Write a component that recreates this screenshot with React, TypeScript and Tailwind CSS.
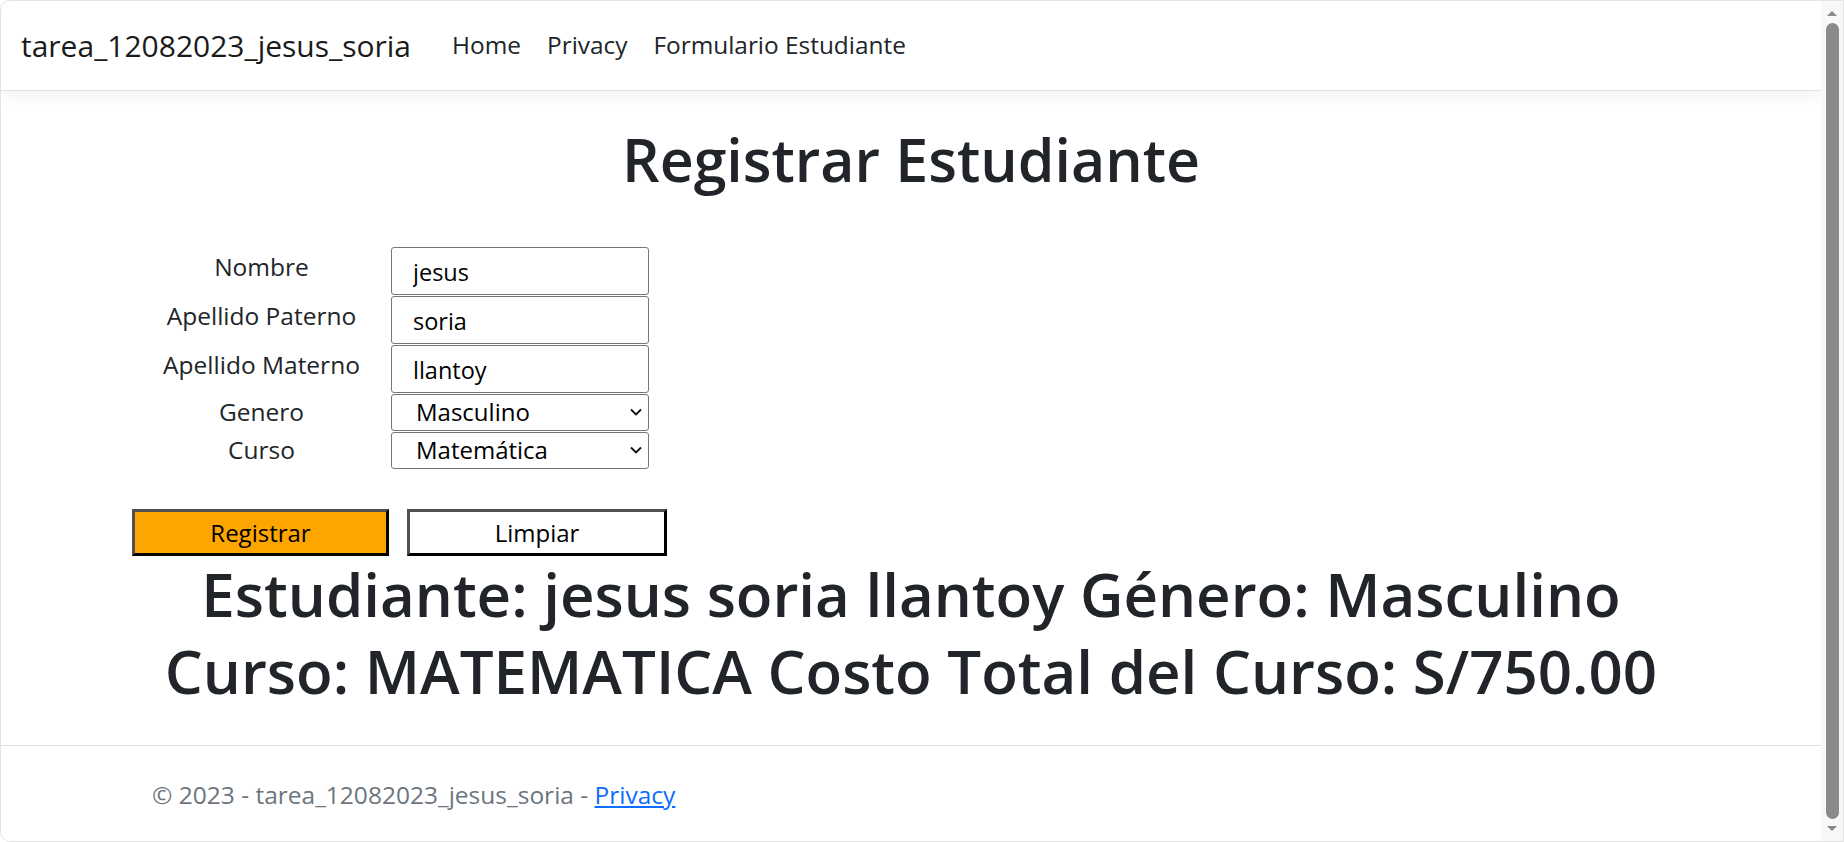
import React from "react";

const font = { fontFamily: '"Open Sans", "Noto Sans", Arial, sans-serif' };

const Chevron = () => (
  <svg width="14" height="10" viewBox="0 0 14 10" fill="none">
    <path d="M2 2.5 L7 7.5 L12 2.5" stroke="#111" strokeWidth="1.8" fill="none" />
  </svg>
);

const TextRow = ({ label, value }: { label: string; value: string }) => (
  <div className="flex items-center h-[49px]">
    <div className="w-[259px] text-center text-[24.5px] text-[#212529] -mt-[6px]">{label}</div>
    <input
      defaultValue={value}
      className="w-[258px] h-[48px] border border-[#767676] rounded-[3px] pl-[21px] pt-[3px] text-[23.5px] text-black outline-none"
      style={font}
    />
  </div>
);

const SelectRow = ({ label, value }: { label: string; value: string }) => (
  <div className="flex items-center h-[38px]">
    <div className="w-[259px] text-center text-[24.5px] text-[#212529]">{label}</div>
    <div className="relative w-[258px] h-[37px]">
      <select
        defaultValue={value}
        className="appearance-none w-full h-full border border-[#767676] rounded-[3px] pl-[24px] text-[24px] leading-[34px] text-black bg-white outline-none"
        style={font}
      >
        <option>{value}</option>
      </select>
      <span className="absolute right-[6px] top-[13px] pointer-events-none">
        <Chevron />
      </span>
    </div>
  </div>
);

const App = () => {
  return (
    <div
      className="w-[1844px] h-[842px] flex overflow-hidden bg-white border border-[#e3e3e3] rounded-l-[10px]"
      style={font}
    >
      <div className="flex-1 flex flex-col">
        <nav className="h-[90px] shrink-0 flex items-center pl-[20px] border-b border-[#dee2e6] shadow-[0_6px_18px_rgba(0,0,0,0.05)]">
          <span className="text-[30px] text-[#1a1a1a]">tarea_12082023_jesus_soria</span>
          <div className="flex ml-[28px] text-[24.4px] text-[#212529]">
            <span className="px-[13px]">Home</span>
            <span className="px-[13px]">Privacy</span>
            <span className="px-[13px]">Formulario Estudiante</span>
          </div>
        </nav>

        <main className="w-[1558px] mx-auto">
          <h1 className="mt-[32px] text-center text-[59px] leading-[72px] font-semibold text-[#212529]">
            Registrar Estudiante
          </h1>

          <div className="mt-[51px] flex flex-col">
            <TextRow label="Nombre" value="jesus" />
            <TextRow label="Apellido Paterno" value="soria" />
            <TextRow label="Apellido Materno" value="llantoy" />
            <SelectRow label="Genero" value="Masculino" />
            <SelectRow label="Curso" value="Matemática" />
          </div>

          <div className="mt-[40px] flex gap-[18px]">
            <button className="w-[257px] h-[47px] bg-[#ffa500] border-[3px] border-t-[#505050] border-l-[#505050] border-b-black border-r-black text-[24px] text-black">
              Registrar
            </button>
            <button className="w-[260px] h-[47px] bg-white border-[3px] border-t-[#505050] border-l-[#505050] border-b-black border-r-black text-[24px] text-black">
              Limpiar
            </button>
          </div>

          <h1 className="text-center text-[60px] leading-[77px] font-semibold text-[#212529]">
            <span className="block">Estudiante: jesus soria llantoy Género: Masculino</span>
            <span className="block">Curso: MATEMATICA Costo Total del Curso: S/750.00</span>
          </h1>
        </main>

        <footer className="mt-auto h-[96px] border-t border-[#dee2e6]">
          <div className="w-[1558px] mx-auto pl-[20px] text-[24.5px] leading-[98px] text-[#6c757d]">
            © 2023 - tarea_12082023_jesus_soria -{" "}
            <a className="text-[#0d6efd] underline">Privacy</a>
          </div>
        </footer>
      </div>

      <div className="w-[22px] shrink-0 bg-[#f8f8f8] flex flex-col items-center py-[8px]">
        <svg width="12" height="8" viewBox="0 0 12 8">
          <path d="M1 7 L6 2 L11 7 Z" fill="#8a8a8a" />
        </svg>
        <div className="flex-1 w-[13px] my-[6px] rounded-full bg-[#8a8a8a]" />
        <svg width="12" height="8" viewBox="0 0 12 8">
          <path d="M1 1 L6 6 L11 1 Z" fill="#8a8a8a" />
        </svg>
      </div>
    </div>
  );
};

export default App;
